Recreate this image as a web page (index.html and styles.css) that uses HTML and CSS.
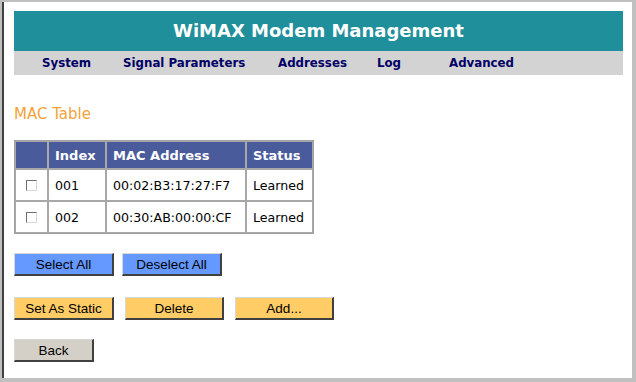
FILE: index.html
```html
<!DOCTYPE html>
<html lang="en">
<head>
  <meta charset="UTF-8">
  <title>WiMAX Modem Management - MAC Table</title>
  <link rel="stylesheet" href="styles.css">
</head>
<body>

<div class="window">
  <div class="header">
    <div class="title">WiMAX Modem Management</div>
    <div class="nav">
      <a href="#">System</a>
      <a href="#">Signal Parameters</a>
      <a href="#">Addresses</a>
      <a href="#">Log</a>
      <a href="#">Advanced</a>
    </div>
  </div>

  <h2 class="page-title">MAC Table</h2>

  <table class="mac-table">
    <thead>
      <tr>
        <th class="col-check"></th>
        <th class="col-index">Index</th>
        <th class="col-mac">MAC Address</th>
        <th class="col-status">Status</th>
      </tr>
    </thead>
    <tbody>
      <tr>
        <td class="cell-check"><span class="checkbox"></span></td>
        <td>001</td>
        <td>00:02:B3:17:27:F7</td>
        <td>Learned</td>
      </tr>
      <tr>
        <td class="cell-check"><span class="checkbox"></span></td>
        <td>002</td>
        <td>00:30:AB:00:00:CF</td>
        <td>Learned</td>
      </tr>
    </tbody>
  </table>

  <div class="btn-row first">
    <button class="btn blue w100">Select All</button>
    <button class="btn blue w100">Deselect All</button>
  </div>

  <div class="btn-row second">
    <button class="btn orange w100">Set As Static</button>
    <button class="btn orange w99">Delete</button>
    <button class="btn orange w99">Add...</button>
  </div>

  <div class="btn-row third">
    <button class="btn grey w80">Back</button>
  </div>
</div>

</body>
</html>
```

FILE: styles.css
```css
* {
  margin: 0;
  padding: 0;
  box-sizing: border-box;
}

html, body {
  width: 100%;
  height: 100%;
  background: #c0c0c0;
  overflow: hidden;
}

body {
  padding-top: 2px;
  padding-left: 2px;
  font-family: "DejaVu Sans", Verdana, sans-serif;
}

.window {
  width: 630px;
  height: 376px;
  background: #fff;
  border-left: 2px solid #404040;
  padding: 9px 9px 0 10px;
}

.header .title {
  height: 40px;
  background: #1f8f9b;
  color: #fff;
  font-size: 18px;
  font-weight: bold;
  text-align: center;
  line-height: 40px;
}

.nav {
  height: 24px;
  background: #d3d3d3;
  display: grid;
  grid-template-columns: 81px 155px 99px 72px auto;
  padding-left: 28px;
  align-items: center;
}

.nav a {
  color: #000066;
  font-size: 11.8px;
  font-weight: bold;
  text-decoration: none;
}

.page-title {
  margin-top: 30px;
  color: #f2a33a;
  font-size: 15px;
  font-weight: normal;
  line-height: 18px;
}

.mac-table {
  margin-top: 17px;
  width: 300px;
  table-layout: fixed;
  border-collapse: separate;
  border-spacing: 0;
  border: 1px solid #a0a0a0;
  font-size: 12.6px;
}

.mac-table th,
.mac-table td {
  border: 1px solid #a8a8a8;
  text-align: left;
  padding-left: 6px;
  vertical-align: middle;
}

.mac-table th {
  height: 28px;
  background: #4a5b9b;
  color: #fff;
  font-size: 13px;
  font-weight: bold;
}

.mac-table td {
  height: 32px;
  color: #000;
}

.col-check { width: 33px; }
.col-index { width: 58px; }
.col-mac { width: 140px; }
.col-status { width: 67px; }

.mac-table td.cell-check {
  padding-left: 10px;
}

.checkbox {
  display: block;
  width: 11px;
  height: 11px;
  border: 1px solid;
  border-color: #707070 #d8d8d8 #d8d8d8 #707070;
  background: #fff;
}

.btn-row {
  display: flex;
  gap: 8px;
}

.btn-row.first {
  margin-top: 19px;
}

.btn-row.second {
  margin-top: 21px;
  gap: 11px;
}

.btn-row.third {
  margin-top: 19px;
}

.btn {
  height: 23px;
  font-family: "Liberation Sans", Arial, sans-serif;
  font-size: 13.5px;
  color: #000;
  border-style: solid;
  border-width: 1px 2px 2px 1px;
  border-color: #d8d8d8 #404040 #404040 #d8d8d8;
  cursor: pointer;
}

.btn.blue { background: #6699ff; }
.btn.orange { background: #ffcc66; }
.btn.grey { background: #d4d0c8; }

.w100 { width: 100px; }
.w99 { width: 99px; }
.w80 { width: 80px; }
```
